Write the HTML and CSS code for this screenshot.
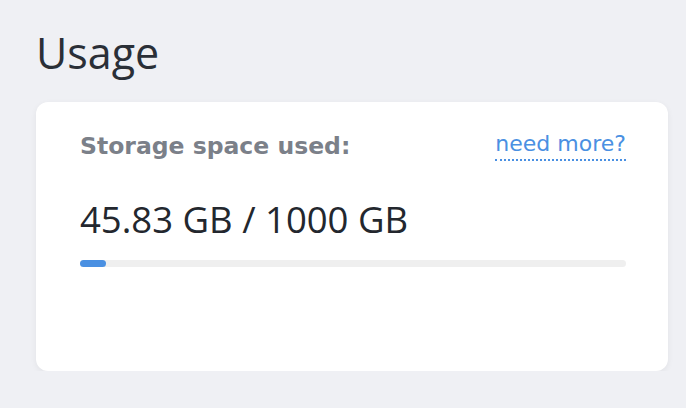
FILE: index.html
```html
<!DOCTYPE html>
<html>
<head>
    <title>Usage</title>
    <link rel="stylesheet" href="styles.css">
</head>
<body>
    <h1 class="title">Usage</h1>
    <div class="card">
        <div class="card-head">
            <span class="label">Storage space used:</span>
            <a class="more" href="#">need more?</a>
        </div>
        <div class="amount">45.83 GB / 1000 GB</div>
        <div class="bar">
            <div class="bar-fill" style="width: 4.76%"></div>
        </div>
    </div>
</body>
</html>
```

FILE: styles.css
```css
body {
    margin: 0;
    padding: 0 18px 0 36px;
    background-color: #eff0f4;
    font-family: "Open Sans", sans-serif;
}

.title {
    margin: 0;
    padding: 25px 0 0 0;
    font-size: 43px;
    font-weight: 400;
    line-height: 56px;
    color: #2a2f37;
}

.card {
    margin-top: 21px;
    height: 269px;
    box-sizing: border-box;
    padding: 29px 42px 0 44px;
    background-color: #fff;
    border-radius: 12px;
    box-shadow: 0 2px 6px rgba(0, 0, 0, 0.06);
}

.card-head {
    display: flex;
    justify-content: space-between;
    align-items: flex-start;
    font-family: "DejaVu Sans", sans-serif;
}

.label {
    font-size: 23.5px;
    font-weight: 700;
    line-height: 30px;
    color: #7b8089;
}

.more {
    display: inline-block;
    margin-top: -2px;
    font-size: 22px;
    line-height: 30px;
    color: #4a90e2;
    text-decoration: none;
    border-bottom: 2px dotted #4a90e2;
}

.amount {
    margin-top: 38px;
    font-size: 36.5px;
    line-height: 40px;
    color: #23272e;
}

.bar {
    margin-top: 21px;
    height: 7px;
    background-color: #efefef;
    border-radius: 4px;
}

.bar-fill {
    height: 100%;
    background-color: #4a90e2;
    border-radius: 4px;
}
```
